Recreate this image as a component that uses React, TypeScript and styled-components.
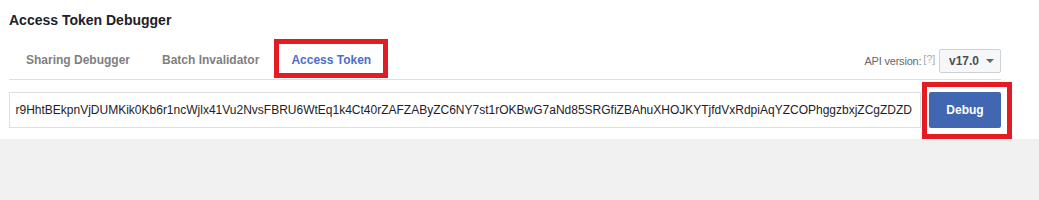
import styled, { createGlobalStyle } from 'styled-components'

const tokenTail =
  'EAAGm0PX4ZCpsBAr' +
  '9HhtBEkpnVjDUMKik0Kb6r1ncWjlx41Vu2NvsFBRU6WtEq1k4Ct40rZAFZAByZC6NY7st1rOKBwG7aNd85SRGfiZBAhuXHOJKYTjfdVxRdpiAqYZCOPhggzbxjZCgZDZD'

const tabs = [
  { label: 'Sharing Debugger', active: false },
  { label: 'Batch Invalidator', active: false },
  { label: 'Access Token', active: true },
]

const GlobalStyle = createGlobalStyle`
  body {
    margin: 0;
    background: #f1f1f1;
    font-family: 'Liberation Sans', Arial, sans-serif;
  }
`

export default function App() {
  return (
    <>
      <GlobalStyle />
      <Panel>
        <Title>Access Token Debugger</Title>
        <TabBar>
          <Tabs>
            {tabs.map((t) => (
              <Tab key={t.label} $active={t.active}>
                {t.label}
              </Tab>
            ))}
          </Tabs>
          <Version>
            <VersionLabel>
              API version:<Help>[?]</Help>
            </VersionLabel>
            <Select>
              v17.0
              <Caret />
            </Select>
          </Version>
        </TabBar>
        <InputRow>
          <TokenField>
            <TokenClip>
              <TokenText>{tokenTail}</TokenText>
            </TokenClip>
          </TokenField>
          <DebugButton>Debug</DebugButton>
        </InputRow>
      </Panel>
    </>
  )
}

const Panel = styled('div')`
  background: #fff;
  padding: 11px 38px 11px 9px;
`

const Title = styled('div')`
  font-size: 14px;
  line-height: 18px;
  font-weight: bold;
  color: #1d2129;
  margin-bottom: 11px;
`

const TabBar = styled('div')`
  display: flex;
  align-items: center;
  justify-content: space-between;
  height: 39px;
  border-bottom: 1px solid #dddfe2;
`

const Tabs = styled('div')`
  display: flex;
  height: 100%;
  padding-left: 1px;
`

// the red frame is a screenshot annotation laid over the active tab
const Tab = styled('div')<{ $active: boolean }>`
  position: relative;
  display: flex;
  align-items: center;
  padding: 0 16px;
  font-size: 12px;
  font-weight: bold;
  color: ${(p) => (p.$active ? '#4a6fc9' : '#7f7f7f')};

  ${(p) =>
    p.$active &&
    `
    &::after {
      content: '';
      position: absolute;
      top: -1px;
      left: -1px;
      right: -1px;
      bottom: 1px;
      border: 5px solid #e31b23;
    }
  `}
`

const Version = styled('div')`
  display: flex;
  align-items: center;
  gap: 4px;
  padding-top: 2px;
`

const VersionLabel = styled('span')`
  font-size: 11px;
  color: #666;
  margin-top: 1px;
  letter-spacing: -0.2px;
`

const Help = styled('span')`
  color: #a7abb1;
  margin-left: 2px;
  position: relative;
  top: -2px;
`

const Select = styled('div')`
  display: flex;
  align-items: center;
  gap: 7px;
  box-sizing: border-box;
  height: 24px;
  width: 62px;
  padding: 0 8px 0 9px;
  border: 1px solid #ced0d4;
  border-radius: 2px;
  background: #f6f7f9;
  font-size: 12px;
  font-weight: bold;
  color: #4b4f56;
`

const Caret = styled('span')`
  width: 0;
  height: 0;
  border-left: 4px solid transparent;
  border-right: 4px solid transparent;
  border-top: 4px solid #606770;
`

const InputRow = styled('div')`
  display: flex;
  gap: 8px;
  margin-top: 12px;
`

const TokenField = styled('div')`
  flex: 1;
  display: flex;
  align-items: center;
  box-sizing: border-box;
  height: 36px;
  padding: 0 8px 0 6px;
  border: 1px solid #dddfe2;
  min-width: 0;
`

// clips at the padding edge, like a scrolled text input
const TokenClip = styled('div')`
  flex: 1;
  display: flex;
  justify-content: flex-end;
  overflow: hidden;
  white-space: nowrap;
`

const TokenText = styled('span')`
  font-size: 12px;
  color: #1d2129;
`

const DebugButton = styled('button')`
  position: relative;
  width: 72px;
  height: 36px;
  border: none;
  border-radius: 2px;
  background: #4267b2;
  color: #fff;
  font-family: inherit;
  font-size: 12px;
  font-weight: bold;

  &::after {
    content: '';
    position: absolute;
    top: -10px;
    left: -7px;
    right: -11px;
    bottom: -11px;
    border: 5px solid #e31b23;
  }
`
